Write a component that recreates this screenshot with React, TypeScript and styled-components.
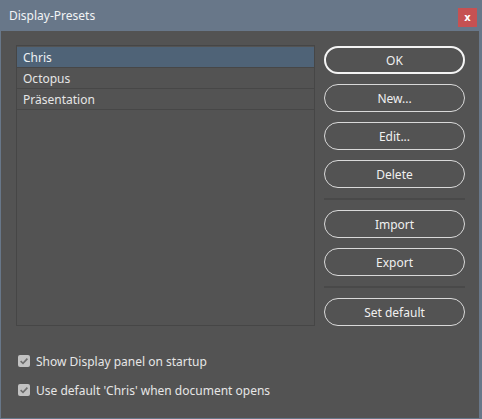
import React, { useState } from 'react';
import styled, { createGlobalStyle, css } from 'styled-components';

const GlobalStyle = createGlobalStyle`
  html, body {
    margin: 0;
    padding: 0;
    background: #687789;
  }
  body {
    font-family: 'Noto Sans', 'Open Sans', sans-serif;
    font-size: 12px;
  }
`;

const Window = styled.div`
  width: 482px;
  height: 419px;
  box-sizing: border-box;
  display: flex;
  flex-direction: column;
  background: #687789;
  padding: 0 3px 1px 1px;
`;

const TitleBar = styled.div`
  height: 31px;
  flex: none;
  display: flex;
  align-items: center;
  justify-content: space-between;
  padding: 0 2px 0 8px;
  color: #f2f4f6;
  font-size: 12px;
`;

const CloseButton = styled.button`
  width: 19px;
  height: 19px;
  margin-top: 4px;
  border: none;
  padding: 0;
  background: #c65152;
  color: #fff;
  font-family: 'DejaVu Sans', sans-serif;
  font-weight: bold;
  font-size: 10px;
  line-height: 19px;
  cursor: pointer;
`;

const Body = styled.div`
  flex: 1;
  display: flex;
  flex-direction: column;
  background: #535353;
  padding: 14px 11px 0 15px;
`;

const Main = styled.div`
  display: flex;
  gap: 9px;
`;

const PresetList = styled.ul`
  list-style: none;
  margin: 0;
  padding: 1px 0 0;
  width: 299px;
  height: 281px;
  box-sizing: border-box;
  border: 1px solid #464646;
`;

const Row = styled.li<{ $selected?: boolean }>`
  height: 21px;
  box-sizing: border-box;
  padding: 2px 6px 0;
  line-height: 18px;
  color: #e6e6e6;
  border-bottom: 1px solid #474747;
  cursor: default;
  ${(p) =>
    p.$selected &&
    css`
      background: #4f6377;
      color: #eef1f4;
    `}
`;

const Actions = styled.div`
  display: flex;
  flex-direction: column;
  width: 141px;
  padding-top: 1px;
`;

const Button = styled.button<{ $primary?: boolean }>`
  height: 28px;
  box-sizing: border-box;
  margin-bottom: 10px;
  border-radius: 14px;
  border: ${(p) => (p.$primary ? '2px solid #f4f4f4' : '1px solid #d9d9d9')};
  background: transparent;
  color: #f0f0f0;
  font-family: inherit;
  font-size: 12px;
  cursor: pointer;
`;

const Divider = styled.div`
  height: 2px;
  background: #494949;
  margin: 0 0 10px;
`;

const Options = styled.div`
  display: flex;
  flex-direction: column;
  gap: 13px;
  margin-top: 17px;
`;

const Option = styled.label`
  display: flex;
  align-items: center;
  gap: 6px;
  padding-left: 2px;
  height: 16px;
  color: #e6e6e6;
  cursor: default;
`;

const Box = styled.span`
  width: 12px;
  height: 12px;
  border-radius: 2px;
  background: #c2c2c2;
  display: flex;
  align-items: center;
  justify-content: center;
`;

const Check: React.FC<{ checked: boolean; label: string; onToggle: () => void }> = ({
  checked,
  label,
  onToggle
}) => (
  <Option onClick={onToggle}>
    <Box>
      {checked && (
        <svg width="10" height="10" viewBox="0 0 10 10">
          <path d="M1.6 5.2 L4 7.4 L8.4 2.6" fill="none" stroke="#6d6d6d" strokeWidth="1.6" />
        </svg>
      )}
    </Box>
    {label}
  </Option>
);

const presets = ['Chris', 'Octopus', 'Präsentation'];

export default function App() {
  const [selected, setSelected] = useState(0);
  const [showPanel, setShowPanel] = useState(true);
  const [useDefault, setUseDefault] = useState(true);

  return (
    <Window>
      <GlobalStyle />
      <TitleBar>
        Display-Presets
        <CloseButton>x</CloseButton>
      </TitleBar>
      <Body>
        <Main>
          <PresetList>
            {presets.map((name, i) => (
              <Row key={name} $selected={i === selected} onClick={() => setSelected(i)}>
                {name}
              </Row>
            ))}
          </PresetList>
          <Actions>
            <Button $primary>OK</Button>
            <Button>New...</Button>
            <Button>Edit...</Button>
            <Button>Delete</Button>
            <Divider />
            <Button>Import</Button>
            <Button>Export</Button>
            <Divider />
            <Button>Set default</Button>
          </Actions>
        </Main>
        <Options>
          <Check checked={showPanel} label="Show Display panel on startup" onToggle={() => setShowPanel(!showPanel)} />
          <Check
            checked={useDefault}
            label={`Use default '${presets[0]}' when document opens`}
            onToggle={() => setUseDefault(!useDefault)}
          />
        </Options>
      </Body>
    </Window>
  );
}
